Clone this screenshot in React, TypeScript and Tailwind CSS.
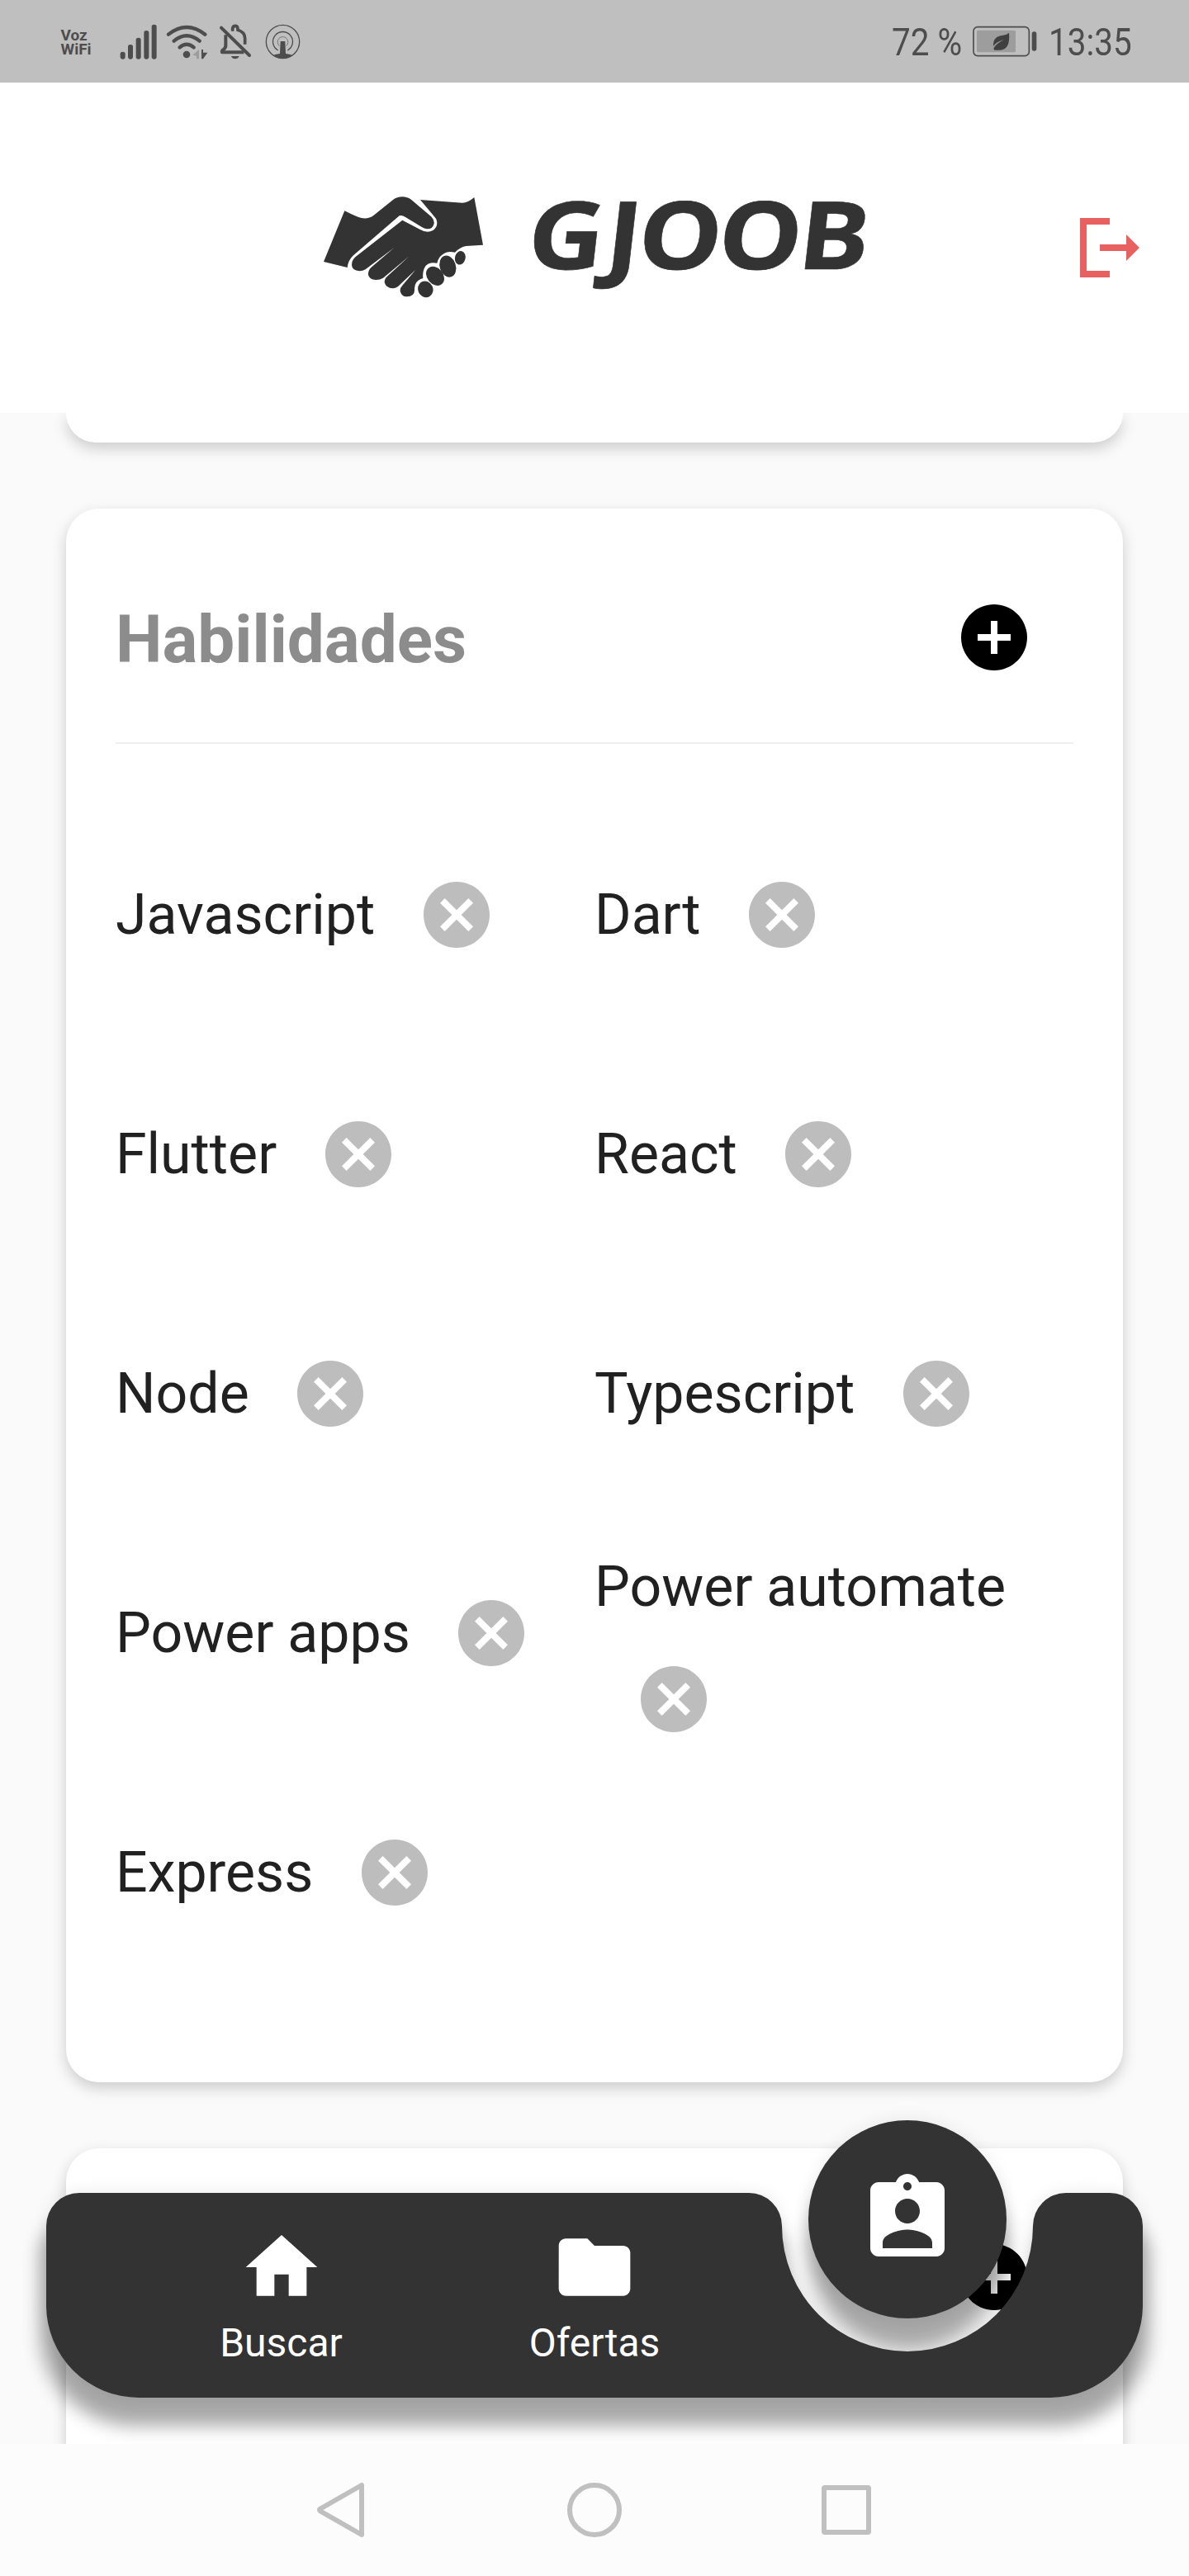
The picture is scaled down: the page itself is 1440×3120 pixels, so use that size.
import React from "react";
import { MdAddCircle, MdAssignmentInd, MdCancel, MdFolder, MdHome } from "react-icons/md";

const INK = "#4d4d4d";

function SignalIcon() {
  const bars = [
    [314, 185],
    [342, 159],
    [371, 134],
    [400, 108],
    [428, 86],
  ];
  return (
    <svg className="ml-[33px] h-[44px] w-[46px] shrink-0" viewBox="312 81 138 132" fill={INK}>
      {bars.map(([x, y]) => (
        <rect key={x} x={x} y={y} width="18" height={212 - y} rx="8.5" />
      ))}
    </svg>
  );
}

function WifiIcon() {
  return (
    <svg className="ml-[10px] h-[44px] w-[52px] shrink-0" viewBox="480 81 156 132" fill="none" stroke={INK} strokeWidth="13" strokeLinecap="round">
      <path d="M489 122Q555 70 622 122M509 146Q555 108 602 146M530 169Q555 148 581 169" />
      <circle cx="555" cy="195" r="13" fill={INK} stroke="none" />
      <path d="M577 197 600 177V211H591V200Z" fill="#9d9d9d" stroke="none" />
      <path d="M609 177H615V188H631L615 211H609Z" fill={INK} stroke="none" />
    </svg>
  );
}

function MutedBellIcon() {
  return (
    <svg className="ml-[12px] h-[44px] w-[40px] shrink-0" viewBox="671 81 120 132" fill="none" stroke={INK} strokeWidth="12">
      <path d="M680 98 782 198" strokeLinecap="round" />
      <path d="M696 124V162Q696 171 689 176Q681 181 683 187H762" strokeLinejoin="round" />
      <path d="M721 110V101Q722 91 731 91Q739 91 740 101V106Q766 114 766 136V158" strokeWidth="11" />
      <path d="M716 201H745Q741 211 730 211Q720 211 716 201Z" fill={INK} stroke="none" />
    </svg>
  );
}

function HotspotIcon() {
  return (
    <svg className="ml-[16px] h-[44px] w-[43px] shrink-0" viewBox="837 87 129 132" fill="none" stroke={INK} strokeWidth="4">
      <circle cx="901.500" cy="154.500" r="60.500" />
      <path d="M884 186A36 36 0 1 1 919 186" />
      <path d="M889 170A19 19 0 1 1 914 170" stroke="#777" strokeWidth="3" />
      <path d="M893 153H910L912 198Q926 199 938 204Q901 226 865 204Q877 199 891 198Z" fill={INK} stroke="none" />
    </svg>
  );
}

function BatteryIcon() {
  return (
    <svg className="h-[40px] w-[78px] shrink-0" viewBox="414 91 234 120">
      <rect x="417" y="99" width="202" height="105" rx="15" fill="none" stroke={INK} strokeWidth="5" />
      <rect x="429" y="111" width="141" height="80" rx="5" fill="#9d9d9d" />
      <rect x="629" y="116" width="17" height="70" rx="8" fill={INK} />
      <path d="M546 120Q552 183 510 183H493L490 177Q500 158 528 145Q500 153 489 168Q487 132 525 129Q539 127 546 120Z" fill="#404040" />
    </svg>
  );
}

function StatusBar() {
  return (
    <div className="flex h-[100px] items-center bg-[#bfbfbf] text-[#4d4d4d]">
      <div className="ml-[73.500px] mt-[2px] w-[38px] text-[19px] font-bold leading-[17.500px]">
        <div>Voz</div>
        <div>WiFi</div>
      </div>
      <SignalIcon />
      <WifiIcon />
      <MutedBellIcon />
      <HotspotIcon />
      <div className="ml-auto mt-[2px] flex h-[56px] w-[98px] origin-left scale-x-[0.860] items-center whitespace-nowrap text-[47px]">
        72 %
      </div>
      <BatteryIcon />
      <div className="ml-[14px] mr-[50px] mt-[2px] flex h-[56px] w-[120px] origin-left scale-x-[0.860] items-center whitespace-nowrap text-[47px]">
        13:35
      </div>
    </div>
  );
}

function Handshake() {
  return (
    <svg className="h-[160px] w-[240px] shrink-0" viewBox="0 0 720 480" fill="#333333">
      <path d="M142 106Q185 128 203 132Q228 137 248 122L318 66Q332 55 352 55Q370 55 385 66L458 128Q468 138 467 152Q462 173 441 172Q435 171 428 168L362 128Q350 120 341 124L174 268Q155 285 152 312L66 291Z" />
      <path d="M417 66 570 77Q590 77 613 57L645 230 583 234Q560 239 543 257Q515 251 499 264Q482 275 478 296Q450 290 436 307Q424 325 427 351Q396 360 396 388Q399 417 368 418Q349 417 344 398Q343 386 352 377L400 320 336 381Q329 387 318 388Q292 387 287 366Q287 352 297 344L377 271 282 350Q271 357 256 357Q231 355 228 338Q227 322 239 311L322 240 218 319Q208 325 196 325Q169 323 168 303Q168 285 182 273L352 140 415 173Q430 182 444 182Q464 182 474 166Q482 150 474 134Z" />
      <ellipse cx="436" cy="391" rx="27" ry="30" transform="rotate(-25 436 391)" />
      <ellipse cx="471" cy="343" rx="29" ry="38" transform="rotate(-40 471 343)" />
      <ellipse cx="517" cy="308" rx="29" ry="40" transform="rotate(-18 517 308)" />
      <ellipse cx="562" cy="277" rx="19" ry="25" transform="rotate(14 562 277)" />
    </svg>
  );
}

const WORDMARK_STRETCH = 1.12;
const WORDMARK_X = [635.5, 730.5, 769, 866, 963.5].map((x) => x / WORDMARK_STRETCH).join(" ");

function Header() {
  return (
    <header className="relative z-10 flex h-[400px] items-start bg-white">
      <div className="ml-[370px] mt-[90px] flex items-start">
        <div className="pt-[30px]">
          <Handshake />
        </div>
        <svg className="h-[220px] w-[480px] overflow-visible" viewBox="610 190 480 220">
          <text
            transform={`translate(0 325.5) skewX(-6.5) scale(${WORDMARK_STRETCH} 1)`}
            x={WORDMARK_X}
            y="0"
            fontFamily="'Open Sans', 'Noto Sans', sans-serif"
            fontSize="114"
            fontWeight="700"
            fill="#333333"
            stroke="#333333"
            strokeWidth="0.600"
          >
            GJOOB
          </text>
        </svg>
      </div>
      <svg className="ml-auto mr-[60px] mt-[164px] h-[72px] w-[72px]" viewBox="0 0 72 72" fill="#e96060">
        <path d="M0 0H36V8H8V64H36V72H0ZM24 32H56V20L72 36 56 52V40H24Z" />
      </svg>
    </header>
  );
}

const CARD = "mx-[80px] bg-white shadow-[0_7px_18px_rgba(0,0,0,0.190)]";

function Skill({ name, wrapped }: { name: string; wrapped?: boolean }) {
  return (
    <div className={wrapped ? "h-[290px] pt-[49px]" : "flex h-[290px] items-center gap-[2.5px]"}>
      <div className="whitespace-nowrap text-[68px] leading-[80px] text-[#212121]">{name}</div>
      <button className="flex size-[192px] shrink-0 items-center justify-center text-[#bdbdbd]">
        <MdCancel className="size-[96px]" />
      </button>
    </div>
  );
}

const SKILLS = ["Javascript", "Dart", "Flutter", "React", "Node", "Typescript", "Power apps", "Power automate", "Express"];

const BAR =
  "M96 136H907A40 40 0 0 1 947 176A152 152 0 0 0 1251 176A40 40 0 0 1 1291 136H1344A40 40 0 0 1 1384 176V272A112 112 0 0 1 1272 384H168A112 112 0 0 1 56 272V176A40 40 0 0 1 96 136Z";

function BottomBar() {
  return (
    <nav className="absolute bottom-0 left-0 h-[440px] w-[1440px] text-white">
      <svg className="absolute inset-0 size-full" viewBox="0 0 1440 440">
        <defs>
          <filter id="soft" x="-20%" y="-20%" width="140%" height="150%">
            <feGaussianBlur stdDeviation="11" />
          </filter>
        </defs>
        <path d={BAR} filter="url(#soft)" opacity="0.08" />
        <path d={BAR} filter="url(#soft)" opacity="0.340" transform="translate(-7.200 34) scale(1.010 1)" />
        <circle cx="1099" cy="168" r="120" filter="url(#soft)" opacity="0.080" />
        <circle cx="1099" cy="204" r="121" filter="url(#soft)" opacity="0.340" />
        <path d={BAR} fill="#333333" />
        <circle cx="1099" cy="168" r="120" fill="#333333" />
      </svg>
      <div className="relative ml-[150px] flex">
        <a className="mt-[174px] flex w-[381px] flex-col items-center">
          <MdHome className="size-[104px]" />
          <span className="mt-[12px] text-[48px] leading-[56px]">Buscar</span>
        </a>
        <a className="mt-[174px] flex w-[378px] flex-col items-center">
          <MdFolder className="size-[104px]" />
          <span className="mt-[12px] text-[48px] leading-[56px]">Ofertas</span>
        </a>
        <a className="mt-[108px] flex w-[380px] flex-col items-center">
          <MdAssignmentInd className="size-[120px]" />
        </a>
      </div>
    </nav>
  );
}

export default function App() {
  return (
    <div className="h-[3120px] w-[1440px] overflow-hidden bg-[#fafafa] font-['Roboto',sans-serif]">
      <StatusBar />
      <Header />
      <main className="relative h-[2460px] overflow-hidden">
        <div className={`${CARD} h-[36px] rounded-b-[40px]`} />
        <section className={`${CARD} mt-[80px] h-[1906px] rounded-[40px] px-[60px]`}>
          <div className="flex h-[285px] items-start justify-between border-b-2 border-[#eeeeee]">
            <h2 className="mt-[112px] text-[80px] font-bold leading-[94px] text-[#8c8c8c]">Habilidades</h2>
            <MdAddCircle className="mr-[48px] mt-[108px] size-[96px] text-black" />
          </div>
          <div className="mt-[62px] grid grid-cols-2">
            {SKILLS.map((name) => (
              <Skill key={name} name={name} wrapped={name === "Power automate"} />
            ))}
          </div>
        </section>
        <section className={`${CARD} mt-[80px] h-[600px] rounded-[40px] px-[60px]`}>
          <div className="flex justify-end">
            <MdAddCircle className="mr-[48px] mt-[108px] size-[96px] text-black" />
          </div>
        </section>
        <BottomBar />
      </main>
      <footer className="flex h-[160px] bg-[#fcfcfc]">
        <svg className="ml-[380px] h-[160px] w-[680px]" viewBox="380 0 680 160" fill="none" stroke="#c0c0c0" strokeWidth="6" strokeLinejoin="round">
          <path d="M438 50V110L389 82Q385 80 389 78Z" />
          <circle cx="720" cy="80" r="30" />
          <rect x="998" y="53" width="54" height="54" rx="1" />
        </svg>
      </footer>
    </div>
  );
}
